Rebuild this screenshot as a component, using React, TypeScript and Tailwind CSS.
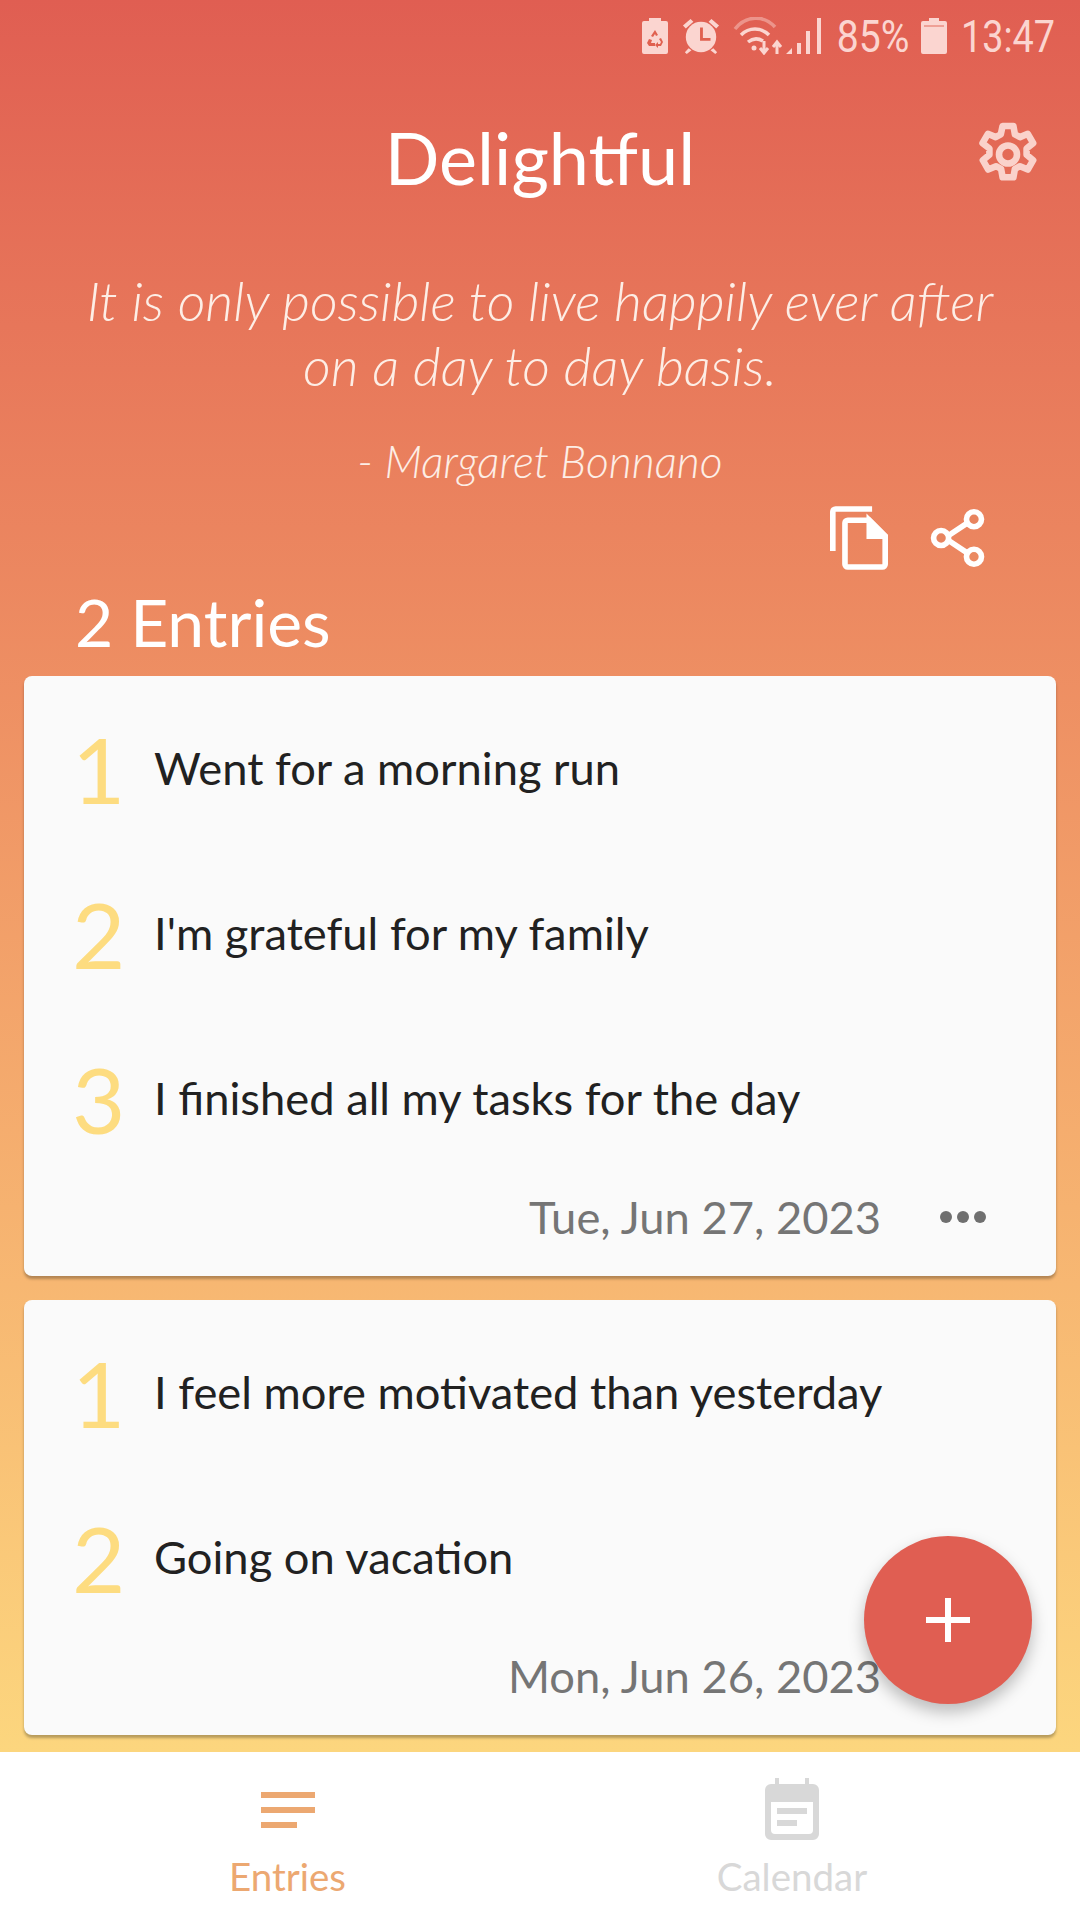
const Row = ({ n, text }: { n: number; text: string }) => (
  <div className="flex h-[165px] items-center pl-[48px]">
    <div className="w-[82px] pb-[4px] text-[92px] leading-none text-[#fddc80]">{n}</div>
    <div className="pb-[6px] text-[45.3px] leading-none text-[#212121]">{text}</div>
  </div>
);

function Card({ items, date, dots }: { items: string[]; date: string; dots?: boolean }) {
  return (
    <div className="mx-[24px] mb-[24px] rounded-[8px] bg-[#fafafa] pt-[12px] shadow-[0_3px_3px_rgba(0,0,0,0.28)]">
      {items.map((t, i) => (
        <Row key={i} n={i + 1} text={t} />
      ))}
      <div className="flex h-[93px] items-start justify-end pr-[52px] pt-[4px] text-[45.3px] leading-[56px] text-[#757575]">
        <span className="mr-[58px] mt-[2px]">{date}</span>
        {dots ? (
          <svg width="48" height="14" viewBox="0 0 48 14" className="mt-[23px] mr-[17px]" fill="#6f6f6f">
            <circle cx="7" cy="7" r="6" />
            <circle cx="24" cy="7" r="6" />
            <circle cx="41" cy="7" r="6" />
          </svg>
        ) : (
          <span className="w-[65px]" />
        )}
      </div>
    </div>
  );
}

function StatusBar() {
  return (
    <div className="flex h-[72px] items-center justify-end pr-[25px] text-[#fbd5d0]">
      <svg width="26" height="36" viewBox="0 0 26 36" className="mr-[14px]" fill="currentColor">
        <path d="M7 0h12v3h5a2 2 0 0 1 2 2v29a2 2 0 0 1-2 2H2a2 2 0 0 1-2-2V5a2 2 0 0 1 2-2h5z" />
        <path d="M13 12l3 5-2 1-1-2-2 3-2-1zM7 21l3 1-1 3h4v3H7l-2-3zM19 20l2 4-2 4h-3v2l-3-3 3-3v2h2l1-2-2-3z" fill="#e0604f" />
      </svg>
      <svg width="38" height="40" viewBox="0 0 40 40" className="mr-[13px]" fill="currentColor">
        <circle cx="20" cy="21" r="16" />
        <path d="M1 9l8-7 3 3-8 7zM39 9l-8-7-3 3 8 7zM7 33l-4 4 2 2 5-4zM33 33l4 4-2 2-5-4z" />
        <path d="M19 11h3v11h8v3H19z" fill="#e0604f" />
      </svg>
      <svg width="50" height="38" viewBox="0 0 50 38" className="mr-[3px]" fill="none" stroke="currentColor">
        <path d="M2 12C13 -2 31 -2 42 10" strokeWidth="3.5" opacity="0.45" />
        <path d="M8 18c8-8 20-8 28 0" strokeWidth="3.5" />
        <path d="M15 25c5-4 10-4 15-1" strokeWidth="3.5" />
        <circle cx="21" cy="31" r="2.5" fill="currentColor" stroke="none" />
        <path d="M31 24v11M27 31l4 5 4-5M44 37V26M40 30l4-5 4 5" strokeWidth="3" />
      </svg>
      <svg width="36" height="38" viewBox="0 0 36 38" className="mr-[15px]" fill="currentColor">
        <path d="M0 37l6-6v6zM11 26h4v11h-4zM20 14h4v23h-4zM31 1h4v36h-4z" />
      </svg>
      <span className="-ml-[11px] mr-[11px] origin-right scale-x-[0.87] font-['Roboto'] text-[45px] leading-none">85%</span>
      <svg width="26" height="36" viewBox="0 0 26 36" className="mr-[14px]" fill="currentColor">
        <path d="M8 0h10v3h6a2 2 0 0 1 2 2v29a2 2 0 0 1-2 2H2a2 2 0 0 1-2-2V5a2 2 0 0 1 2-2h6z" />
        <path d="M3 7h20v2H3z" fill="#e0604f" opacity="0.45" />
      </svg>
      <span className="-ml-[18px] origin-right scale-x-[0.84] font-['Roboto'] text-[45px] leading-none">13:47</span>
    </div>
  );
}

export default function App() {
  return (
    <div className="flex h-[1920px] w-[1080px] flex-col overflow-hidden bg-white font-['Lato',sans-serif]">
      <div className="relative h-[1752px] overflow-hidden bg-gradient-to-b from-[#e05e52] to-[#fcd67e]">
        <StatusBar />
        <div className="relative mt-[25px] flex h-[120px] items-center justify-center">
          <h1 className="text-[72px] leading-none text-white">Delightful</h1>
          <svg width="72" height="72" viewBox="0 0 24 24" className="absolute right-[36px] top-[23px]" fill="none" stroke="#fad2cb" strokeWidth="2.2" strokeLinejoin="round">
            <path d="M10.2 2h3.6l.5 2.8 1.7.9 2.6-1.1 1.8 3.1-2.2 1.8v2.1l2.2 1.8-1.8 3.1-2.6-1.1-1.7.9-.5 2.8h-3.6l-.5-2.8-1.7-.9-2.6 1.1-1.8-3.1 2.2-1.8V9.5L3.5 7.7l1.8-3.1 2.6 1.1 1.7-.9z" />
            <circle cx="12" cy="11.5" r="3" />
          </svg>
        </div>
        <div className="mt-[51px] text-center text-[54px] font-light italic leading-[65px] text-[#fdeee6]">
          <p>It is only possible to live happily ever after</p>
          <p>on a day to day basis.</p>
        </div>
        <p className="mt-[35px] text-center text-[44.5px] font-light italic leading-[56px] text-[#fdeee6]">- Margaret Bonnano</p>
        <div className="mt-[12px] flex h-[74px] items-center justify-end pr-[94px]">
          <svg width="58" height="66" viewBox="0 0 62 68" className="mr-[42px]" fill="none" stroke="#fff" strokeWidth="6">
            <path d="M3 48V6a3 3 0 0 1 3-3h39" />
            <path d="M16 18a3 3 0 0 1 3-3h23l17 17v30a3 3 0 0 1-3 3H19a3 3 0 0 1-3-3z" />
            <path d="M42 15l17 17H42z" fill="#fff" />
          </svg>
          <svg width="56" height="62" viewBox="0 0 58 66" fill="none" stroke="#fff" strokeWidth="6">
            <path d="M42 15L15 33l27 18" />
            <circle cx="46" cy="13" r="8" fill="#e8845f" />
            <circle cx="11" cy="33" r="8" fill="#e8845f" />
            <circle cx="46" cy="53" r="8" fill="#eb8a62" />
          </svg>
        </div>
        <div className="mt-[11px] pl-[75px] text-[66px] leading-[72px] text-white">2 Entries</div>
        <div className="mt-[18px]">
          <Card items={['Went for a morning run', "I'm grateful for my family", 'I finished all my tasks for the day']} date="Tue, Jun 27, 2023" dots />
          <Card items={['I feel more motivated than yesterday', 'Going on vacation']} date="Mon, Jun 26, 2023" />
        </div>
        <button className="absolute left-[864px] top-[1536px] flex h-[168px] w-[168px] items-center justify-center rounded-full bg-[#e05e52] shadow-[0_8px_16px_rgba(0,0,0,0.25)]">
          <svg width="44" height="44" viewBox="0 0 44 44" fill="#fff">
            <path d="M19 0h6v19h19v6H25v19h-6V25H0v-6h19z" />
          </svg>
        </button>
      </div>
      <nav className="flex h-[168px] bg-white">
        <div className="flex w-[575px] flex-col items-center pt-[40px]">
          <svg width="56" height="38" viewBox="0 0 56 38" fill="#eca871">
            <path d="M1 0h54v6H1zM1 15h54v6H1zM1 30h36v6H1z" />
          </svg>
          <span className="mt-[24px] text-[38.5px] leading-[44px] text-[#eca871]">Entries</span>
        </div>
        <div className="flex w-[434px] flex-col items-center pt-[26px]">
          <svg width="54" height="62" viewBox="0 0 54 62" fill="#d8d8d8">
            <path d="M10 0h4v6h26V0h4v6h4a6 6 0 0 1 6 6v44a6 6 0 0 1-6 6H6a6 6 0 0 1-6-6V12a6 6 0 0 1 6-6h4zM6 24v28a4 4 0 0 0 4 4h34a4 4 0 0 0 4-4V24z" fillRule="evenodd" />
            <path d="M12 30h30v6H12zM12 42h20v6H12z" />
          </svg>
          <span className="mt-[14px] text-[38.5px] leading-[44px] text-[#d8d8d8]">Calendar</span>
        </div>
      </nav>
    </div>
  );
}
